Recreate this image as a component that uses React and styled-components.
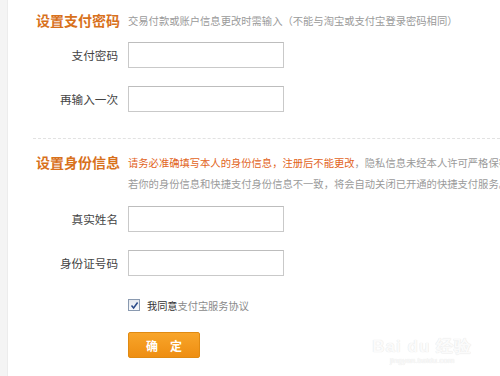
import React from 'react';
import styled, { createGlobalStyle } from 'styled-components';

const GlobalStyle = createGlobalStyle`
  html, body {
    margin: 0;
    padding: 0;
    background: #fff;
  }
  body {
    font-family: "Noto Sans CJK SC", "Noto Sans", sans-serif;
  }
`;

const Page = styled.div`
  position: relative;
  display: flex;
  width: 500px;
  height: 376px;
  overflow: hidden;
  background: #fff;
`;

const SideStrip = styled.div`
  width: 7px;
  flex: none;
  background: #f4f4f4;
  border-right: 1px solid #ececec;
`;

const Main = styled.div`
  flex: 1;
  min-width: 0;
  padding-top: 10px;
  padding-left: 28px;
`;

const SectionHead = styled.div`
  display: grid;
  grid-template-columns: 82px 1fr;
  column-gap: 10px;
  align-items: start;
  margin-top: ${(p) => p.top || 0}px;
`;

const Title = styled.div`
  font-size: 14px;
  font-weight: bold;
  line-height: 21px;
  color: #d8711c;
  white-space: nowrap;
`;

const Note = styled.div`
  font-size: 10.3px;
  line-height: 21px;
  color: #9a9a9a;
  white-space: nowrap;
`;

const Warn = styled.span`
  color: #e2641c;
`;

const Row = styled.div`
  display: grid;
  grid-template-columns: 82px 156px;
  column-gap: 10px;
  align-items: center;
  margin-top: ${(p) => p.top}px;
`;

const Label = styled.label`
  text-align: right;
  font-size: 11.6px;
  color: #444;
  white-space: nowrap;
`;

const Field = styled.input`
  box-sizing: border-box;
  width: 156px;
  height: 26px;
  margin: 0;
  border: 1px solid #c9c9c9;
  border-top-color: #bdbdbd;
  background: #fff;
  outline: none;
`;

const Divider = styled.div`
  margin-top: 26px;
  margin-left: -3px;
  border-top: 1px dashed #e2e2e2;
`;

const Agree = styled.div`
  display: flex;
  align-items: center;
  gap: 7px;
  margin-top: 19px;
  margin-left: 92px;
  height: 20px;
  font-size: 10.2px;
  color: #333;
`;

const Box = styled.span`
  box-sizing: border-box;
  width: 12px;
  height: 12px;
  display: flex;
  align-items: center;
  justify-content: center;
  border: 1px solid #8a9ab0;
  background: linear-gradient(#e4e8ee, #f8f9fb);
`;

const Muted = styled.span`
  color: #8a8a8a;
`;

const Submit = styled.button`
  display: block;
  box-sizing: border-box;
  width: 72px;
  height: 26px;
  margin: 17px 0 0 92px;
  padding: 0;
  border: 1px solid #e08a12;
  border-radius: 2px;
  background: linear-gradient(#f8a52a, #ee8e12);
  color: #fff;
  font-family: inherit;
  font-size: 12px;
  font-weight: bold;
  letter-spacing: 12px;
  text-indent: 12px;
`;

const Watermark = styled.div`
  position: absolute;
  right: 28px;
  bottom: 10px;
  display: flex;
  flex-direction: column;
  align-items: center;
  color: #fbfbfb;
  text-shadow: 0 0 1px #e6e6e6, 0 0 1px #e6e6e6;
  font-family: "Liberation Sans", Arial, sans-serif;
`;

const Mark = styled.div`
  font-size: 17px;
  font-weight: bold;
  line-height: 18px;
  letter-spacing: 1px;
`;

const MarkUrl = styled.div`
  font-size: 8px;
  line-height: 10px;
`;

function Check() {
  return (
    <svg width="9" height="9" viewBox="0 0 9 9">
      <path d="M1.5 4.5 L3.6 7 L7.6 1.5" fill="none" stroke="#2a4a88" strokeWidth="1.5" />
    </svg>
  );
}

export default function App() {
  return (
    <Page>
      <GlobalStyle />
      <SideStrip />
      <Main>
        <SectionHead>
          <Title>设置支付密码</Title>
          <Note>交易付款或账户信息更改时需输入（不能与淘宝或支付宝登录密码相同）</Note>
        </SectionHead>

        <Row top={11}>
          <Label>支付密码</Label>
          <Field type="password" />
        </Row>
        <Row top={18}>
          <Label>再输入一次</Label>
          <Field type="password" />
        </Row>

        <Divider />

        <SectionHead top={13}>
          <Title>设置身份信息</Title>
          <div>
            <Note>
              <Warn>请务必准确填写本人的身份信息，注册后不能更改</Warn>，隐私信息未经本人许可严格保密。
            </Note>
            <Note>若你的身份信息和快捷支付身份信息不一致，将会自动关闭已开通的快捷支付服务。</Note>
          </div>
        </SectionHead>

        <Row top={12}>
          <Label>真实姓名</Label>
          <Field type="text" />
        </Row>
        <Row top={18}>
          <Label>身份证号码</Label>
          <Field type="text" />
        </Row>

        <Agree>
          <Box><Check /></Box>
          <span>我同意<Muted>支付宝服务协议</Muted></span>
        </Agree>

        <Submit>确定</Submit>
      </Main>

      <Watermark>
        <Mark>Bai du 经验</Mark>
        <MarkUrl>jingyan.baidu.com</MarkUrl>
      </Watermark>
    </Page>
  );
}
